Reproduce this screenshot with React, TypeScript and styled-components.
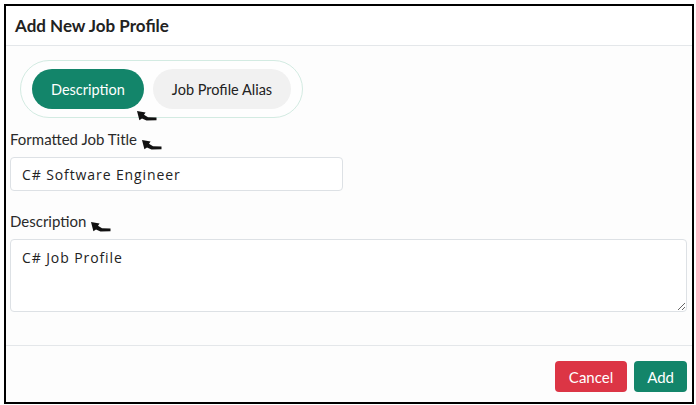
import React, { useState } from 'react';
import styled, { createGlobalStyle } from 'styled-components';

const GlobalStyle = createGlobalStyle`
  html, body {
    margin: 0;
    padding: 0;
    background: #ffffff;
  }
  body {
    font-family: 'Lato', 'Noto Sans', sans-serif;
    color: #212529;
  }
`;

const Frame = styled.div`
  box-sizing: border-box;
  margin: 4px 0 0 4px;
  width: 690px;
  height: 400px;
  border: 2px solid #000;
  background: #fdfdfd;
  display: flex;
  flex-direction: column;
`;

const Header = styled.div`
  height: 39px;
  display: flex;
  align-items: center;
  padding: 0 9px;
  background: #fff;
  border-bottom: 1px solid #e4e7ea;
`;

const Title = styled.h5`
  margin: 0;
  font-size: 17px;
  font-weight: 700;
  color: #222;
`;

const Body = styled.div`
  flex: 1;
  padding: 14px 5px 0 4px;
  display: flex;
  flex-direction: column;
  border-bottom: 1px solid #e4e7ea;
`;

const TabRow = styled.div`
  display: flex;
  align-items: flex-start;
`;

const TabPill = styled.div`
  position: relative;
  margin-left: 10px;
  display: inline-flex;
  gap: 9px;
  padding: 8px 11px;
  border: 1px solid #d3ebe2;
  border-radius: 30px;
  background: #fefefe;
`;

const Tab = styled.button<{ $active?: boolean }>`
  height: 40px;
  padding: 0 19px;
  border: none;
  border-radius: 20px;
  font-family: inherit;
  font-size: 14.5px;
  cursor: pointer;
  background: ${p => (p.$active ? '#13856a' : '#f1f1f1')};
  color: ${p => (p.$active ? '#fff' : '#222')};
`;

const Label = styled.label<{ $first?: boolean }>`
  display: flex;
  align-items: center;
  gap: 5px;
  height: 18px;
  font-size: 15px;
  color: #2a2a2a;
  margin: ${p => (p.$first ? '12px 0 9px' : '21px 0 9px')};
`;

const Input = styled.input`
  box-sizing: border-box;
  width: 333px;
  height: 34px;
  padding: 0 11px;
  border: 1px solid #dde1e5;
  border-radius: 4px;
  font-family: 'Open Sans', sans-serif;
  font-size: 14px;
  letter-spacing: 0.9px;
  color: #222;
  background: #fff;
  outline: none;
`;

const TextArea = styled.textarea`
  box-sizing: border-box;
  width: 677px;
  height: 73px;
  padding: 8px 11px;
  border: 1px solid #dde1e5;
  border-radius: 4px;
  font-family: 'Open Sans', sans-serif;
  font-size: 14px;
  line-height: 20px;
  letter-spacing: 0.9px;
  color: #222;
  background: #fff;
  outline: none;
  resize: vertical;
`;

const Footer = styled.div`
  flex: 0 0 56px;
  box-sizing: border-box;
  display: flex;
  justify-content: flex-end;
  align-items: flex-start;
  gap: 7px;
  padding: 15px 5px 0 0;
`;

const ActionButton = styled.button<{ $variant: 'danger' | 'primary' }>`
  height: 31px;
  padding: 0 ${p => (p.$variant === 'danger' ? 14 : 13)}px;
  border: none;
  border-radius: 4px;
  font-family: inherit;
  font-size: 15px;
  color: #fff;
  cursor: pointer;
  background: ${p => (p.$variant === 'danger' ? '#dc3545' : '#13856a')};
`;

const PointerWrap = styled.span<{ $over?: boolean }>`
  display: inline-flex;
  ${p => (p.$over ? 'position: absolute; left: 116px; top: 50px;' : 'margin-top: 12px;')}
`;

const Pointer: React.FC<{ over?: boolean }> = ({ over }) => (
  <PointerWrap $over={over}>
    <svg width="20" height="10" viewBox="0 0 20 10">
      <path
        d="M0 0 L8.6 1.4 L7 3.8 L11 6.2 L19.5 6.6 L19.5 9.2 L9.5 9.6 L5 7.6 L2.4 9.2 Z"
        fill="#111"
      />
    </svg>
  </PointerWrap>
);

const App: React.FC = () => {
  const [tab, setTab] = useState('description');
  const [title, setTitle] = useState('C# Software Engineer');
  const [desc, setDesc] = useState('C# Job Profile');

  return (
    <>
      <GlobalStyle />
      <Frame>
        <Header>
          <Title>Add New Job Profile</Title>
        </Header>
        <Body>
          <TabRow>
            <TabPill>
              <Tab $active={tab === 'description'} onClick={() => setTab('description')}>
                Description
              </Tab>
              <Tab $active={tab === 'alias'} onClick={() => setTab('alias')}>
                Job Profile Alias
              </Tab>
              <Pointer over />
            </TabPill>
          </TabRow>
          <Label htmlFor="title" $first>
            Formatted Job Title <Pointer />
          </Label>
          <Input id="title" value={title} onChange={e => setTitle(e.target.value)} />
          <Label htmlFor="desc">
            Description <Pointer />
          </Label>
          <TextArea id="desc" value={desc} onChange={e => setDesc(e.target.value)} />
        </Body>
        <Footer>
          <ActionButton $variant="danger">Cancel</ActionButton>
          <ActionButton $variant="primary">Add</ActionButton>
        </Footer>
      </Frame>
    </>
  );
};

export default App;
